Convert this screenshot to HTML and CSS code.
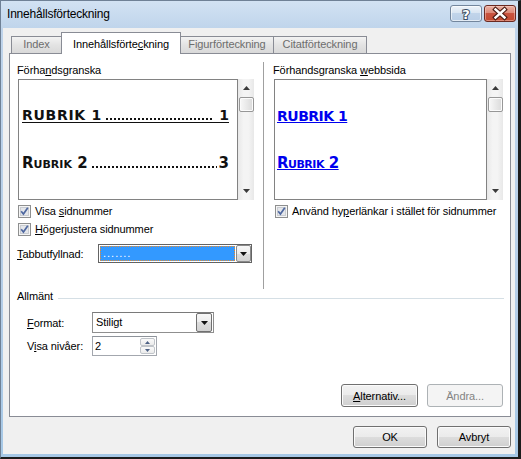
FILE: index.html
```html
<!DOCTYPE html>
<html lang="sv">
<head>
<meta charset="utf-8">
<title>Innehållsförteckning</title>
<link rel="stylesheet" href="styles.css">
</head>
<body>
<div class="window">
  <div class="titlebar">
    <span class="title">Innehållsförteckning</span>
    <div class="tb-buttons">
      <div class="tb-btn help">
        <svg width="30" height="15" viewBox="0 0 30 15"><text x="15" y="12.5" text-anchor="middle" class="qmark">?</text></svg>
      </div>
      <div class="tb-btn close">
        <svg width="30" height="15" viewBox="0 0 30 15">
          <path d="M10.5 3.5 L19.5 11.5 M19.5 3.5 L10.5 11.5" stroke="#4b1a12" stroke-width="4.6" stroke-linecap="square" fill="none"/>
          <path d="M10.5 3.5 L19.5 11.5 M19.5 3.5 L10.5 11.5" stroke="#ffffff" stroke-width="2.4" stroke-linecap="square" fill="none"/>
        </svg>
      </div>
    </div>
  </div>
  <div class="client">
    <div class="tabs">
      <div class="tab t-index">Index</div>
      <div class="tab active t-toc">Innehållsförte<u>c</u>kning</div>
      <div class="tab t-fig">Figurförteckning</div>
      <div class="tab t-cit">Citatförteckning</div>
    </div>
    <div class="panel">
      <div class="cols">
        <div class="col col-left">
          <div class="label">Förha<u>n</u>dsgranska</div>
          <div class="preview-row">
            <div class="preview preview-print">
              <div class="toc1"><span class="lbl">RUBRIK 1</span><span class="lead"></span><span class="pg">1</span></div>
              <div class="toc2"><span class="lbl">Rubrik 2</span><span class="lead"></span><span class="pg">3</span></div>
            </div>
            <div class="scrollbar">
              <svg class="arr" width="7" height="4" viewBox="0 0 7 4"><path d="M3.5 0 L7 4 L0 4 Z" fill="#3a3a3a"/></svg>
              <div class="thumb"></div>
              <div class="sb-fill"></div>
              <svg class="arr" width="7" height="4" viewBox="0 0 7 4"><path d="M0 0 L7 0 L3.5 4 Z" fill="#3a3a3a"/></svg>
            </div>
          </div>
          <div class="check-row first">
            <svg class="cb" width="13" height="13" viewBox="0 0 13 13"><rect x="0.5" y="0.5" width="12" height="12" fill="#f5f5f5" stroke="#8e8f8f"/><rect x="2.5" y="2.5" width="8" height="8" fill="#e4e6ea" stroke="#c9ccd1"/><path d="M3.2 6.3 L5.4 9 L9.8 2.8" fill="none" stroke="#4f68a0" stroke-width="1.7"/></svg>
            <span>Visa <u>s</u>idnummer</span>
          </div>
          <div class="check-row">
            <svg class="cb" width="13" height="13" viewBox="0 0 13 13"><rect x="0.5" y="0.5" width="12" height="12" fill="#f5f5f5" stroke="#8e8f8f"/><rect x="2.5" y="2.5" width="8" height="8" fill="#e4e6ea" stroke="#c9ccd1"/><path d="M3.2 6.3 L5.4 9 L9.8 2.8" fill="none" stroke="#4f68a0" stroke-width="1.7"/></svg>
            <span><u>H</u>ögerjustera sidnummer</span>
          </div>
          <div class="field-row tab-row">
            <span class="flabel"><u>T</u>abbutfyllnad:</span>
            <div class="combo combo-focus">
              <div class="combo-sel"><span class="sel-text">.......</span></div>
              <div class="combo-btn"><svg width="7" height="4" viewBox="0 0 7 4"><path d="M0 0 L7 0 L3.5 4 Z" fill="#111"/></svg></div>
            </div>
          </div>
        </div>
        <div class="divider"></div>
        <div class="col col-right">
          <div class="label">Förhandsgranska <u>w</u>ebbsida</div>
          <div class="preview-row">
            <div class="preview preview-web">
              <div class="web1">RUBRIK 1</div>
              <div class="web2">Rubrik 2</div>
            </div>
            <div class="scrollbar">
              <svg class="arr" width="7" height="4" viewBox="0 0 7 4"><path d="M3.5 0 L7 4 L0 4 Z" fill="#3a3a3a"/></svg>
              <div class="thumb"></div>
              <div class="sb-fill"></div>
              <svg class="arr" width="7" height="4" viewBox="0 0 7 4"><path d="M0 0 L7 0 L3.5 4 Z" fill="#3a3a3a"/></svg>
            </div>
          </div>
          <div class="check-row first right-check">
            <svg class="cb" width="13" height="13" viewBox="0 0 13 13"><rect x="0.5" y="0.5" width="12" height="12" fill="#f5f5f5" stroke="#8e8f8f"/><rect x="2.5" y="2.5" width="8" height="8" fill="#e4e6ea" stroke="#c9ccd1"/><path d="M3.2 6.3 L5.4 9 L9.8 2.8" fill="none" stroke="#4f68a0" stroke-width="1.7"/></svg>
            <span>Använd hy<u>p</u>erlänkar i stället för sidnummer</span>
          </div>
        </div>
      </div>
      <div class="group">
        <span class="group-title">Allmänt</span>
        <div class="group-line"></div>
      </div>
      <div class="form-row format-row">
        <span class="flabel2"><u>F</u>ormat:</span>
        <div class="combo combo-format">
          <div class="combo-val">Stiligt</div>
          <div class="combo-btn"><svg width="7" height="4" viewBox="0 0 7 4"><path d="M0 0 L7 0 L3.5 4 Z" fill="#111"/></svg></div>
        </div>
      </div>
      <div class="form-row level-row">
        <span class="flabel2">V<u>i</u>sa nivåer:</span>
        <div class="spinner">
          <div class="spin-val">2</div>
          <div class="spin-btns">
            <div class="spin-btn"><svg width="5" height="3" viewBox="0 0 5 3"><path d="M2.5 0 L5 3 L0 3 Z" fill="#4d6185"/></svg></div>
            <div class="spin-btn"><svg width="5" height="3" viewBox="0 0 5 3"><path d="M0 0 L5 0 L2.5 3 Z" fill="#4d6185"/></svg></div>
          </div>
        </div>
      </div>
      <div class="panel-buttons">
        <div class="btn btn-alt"><span><u>A</u>lternativ...</span></div>
        <div class="btn btn-disabled btn-change"><span>Ändra...</span></div>
      </div>
    </div>
    <div class="dialog-buttons">
      <div class="btn btn-ok">OK</div>
      <div class="btn btn-cancel">Avbryt</div>
    </div>
  </div>
</div>
</body>
</html>
```
FILE: styles.css
```css
html, body {
  margin: 0;
  padding: 0;
  background: #1c1c1c;
  width: 521px;
  height: 459px;
  overflow: hidden;
}

.window {
  box-sizing: border-box;
  width: 521px;
  height: 459px;
  border-left: 1px solid #6f8196;
  border-top: 1px solid #6f8196;
  border-right: 3px solid #1c1c1c;
  border-bottom: 2px solid #1c1c1c;
  background: linear-gradient(#d2e2f3 0px, #bfd4eb 28px, #b4cde7 300px, #a6c8e6 100%);
  padding: 0 3px 3px 2px;
  display: flex;
  flex-direction: column;
  font-family: "Liberation Sans", Arial, sans-serif;
  font-size: 11px;
  letter-spacing: -0.1px;
  color: #000;
}

/* ---------- title bar ---------- */
.titlebar {
  height: 27px;
  display: flex;
  align-items: flex-start;
  margin-right: -2px;
  flex: none;
}

.title {
  font-size: 12px;
  line-height: 14px;
  letter-spacing: -0.2px;
  padding: 6px 0 0 4px;
  color: #000;
}

.tb-buttons {
  margin-left: auto;
  display: flex;
  gap: 2px;
  padding: 4px 1px 0 0;
}

.tb-btn {
  box-sizing: border-box;
  width: 32px;
  height: 17px;
  border-radius: 3px;
  display: flex;
  align-items: center;
  justify-content: center;
}

.help {
  border: 1px solid #73869d;
  background: linear-gradient(#eef3f9 0%, #d9e5f2 45%, #c1d4ea 50%, #b9cee6 100%);
  box-shadow: inset 0 0 0 1px rgba(255,255,255,0.6);
}

.close {
  border: 1px solid #6b2a22;
  background: linear-gradient(#eab1a4 0%, #dc8a78 45%, #c8533f 50%, #c2492f 100%);
  box-shadow: inset 0 0 0 1px rgba(255,220,210,0.45);
}

.qmark {
  font-family: "DejaVu Sans", sans-serif;
  font-weight: bold;
  font-size: 13px;
  fill: #ffffff;
  stroke: #3d4d62;
  stroke-width: 2px;
  paint-order: stroke fill;
}

/* ---------- client ---------- */
.client {
  flex: 1;
  background: #f0f0f0;
  padding: 0 4px 0 6px;
  display: flex;
  flex-direction: column;
}

.tabs {
  display: flex;
  align-items: flex-end;
  height: 21px;
  margin-top: 4px;
  padding-left: 2px;
}

.tab {
  box-sizing: border-box;
  height: 17px;
  border: 1px solid #898c95;
  border-bottom: none;
  margin-right: -1px;
  line-height: 15px;
  padding-bottom: 1px;
  text-align: center;
  color: #6d6d6d;
  background: linear-gradient(#f3f3f3, #e3e3e3 50%, #d9d9d9);
}

.t-index { width: 51px; }
.t-toc { width: 120px; }
.t-fig { width: 94px; }
.t-cit { width: 94px; }

.tab.active {
  position: relative;
  z-index: 1;
  height: 22px;
  margin-bottom: -1px;
  padding-top: 4px;
  padding-bottom: 2px;
  background: #ffffff;
  color: #000;
}

.panel {
  box-sizing: border-box;
  width: 502px;
  height: 364px;
  border: 1px solid #898c95;
  background: #ffffff;
  padding: 9px 7px 0 7px;
  display: flex;
  flex-direction: column;
}

.cols {
  display: flex;
  height: 226px;
}

.col-left { width: 237px; }
.col-right { width: 230px; }

.divider {
  width: 1px;
  border-right: 1px solid #ffffff;
  background: #a0a0a0;
  height: 227px;
  margin: -1px 8px 0 9px;
}

.label {
  height: 15px;
  line-height: 15px;
  margin-bottom: 1px;
  white-space: nowrap;
}

.preview-row {
  display: flex;
  height: 121px;
  margin-left: 1px;
}

.preview {
  box-sizing: border-box;
  height: 121px;
  border: 1px solid #828282;
  background: #fff;
  font-family: "DejaVu Sans", sans-serif;
  font-weight: bold;
  letter-spacing: 0;
  overflow: hidden;
}

.preview-print {
  width: 220px;
  padding: 28px 8px 0 3px;
  color: #111;
}

.preview-web {
  width: 213px;
  padding: 28px 6px 0 2px;
  color: #0000ee;
}

.toc1, .toc2 {
  display: flex;
  white-space: nowrap;
}

.toc1 {
  font-size: 14px;
  line-height: 14px;
  height: 14px;
  border-bottom: 1px solid #111;
}

.toc1 .lbl {
  letter-spacing: 0.7px;
}

.toc1 .lead {
  margin: 0 5px 0 4px;
  background-position: 0 10px;
}

.toc2 {
  font-size: 15px;
  line-height: 18px;
  margin-top: 31px;
  font-variant: small-caps;
}

.toc2 .lead {
  margin: 0 2px 0 4px;
  background-position: 0 12px;
}

.lead {
  flex: 1;
  min-width: 0;
  background-image: linear-gradient(90deg, #111 2px, transparent 2px);
  background-size: 4px 2px;
  background-repeat: repeat-x;
}

.web1, .web2 {
  text-decoration: underline;
  text-decoration-thickness: 1.4px;
  white-space: nowrap;
  letter-spacing: -0.5px;
}

.web1 {
  font-size: 14px;
  line-height: 16px;
}

.web2 {
  font-size: 15px;
  line-height: 18px;
  margin-top: 30px;
  font-variant: small-caps;
}

.scrollbar {
  box-sizing: border-box;
  width: 16px;
  height: 121px;
  background: linear-gradient(90deg, #e8e8e8, #f4f4f4 35%, #f4f4f4 65%, #e8e8e8);
  display: flex;
  flex-direction: column;
  align-items: center;
  padding: 7px 0 7px;
}

.arr { flex: none; display: block; }

.thumb {
  box-sizing: border-box;
  width: 15px;
  height: 15px;
  margin-top: 7px;
  border: 1px solid #979797;
  border-radius: 2px;
  background: linear-gradient(90deg, #f8f8f8, #e9e9e9 50%, #dadada);
  box-shadow: inset 0 0 0 1px #fbfbfb;
}

.sb-fill { flex: 1; }

.check-row {
  display: flex;
  align-items: center;
  height: 13px;
  line-height: 13px;
  margin-top: 5px;
  margin-left: 1px;
  white-space: nowrap;
}

.right-check { margin-left: 2px; }

.cb {
  flex: none;
  display: block;
  margin-right: 4px;
}

.field-row {
  display: flex;
  align-items: center;
  margin-top: 8px;
  height: 19px;
}

.flabel {
  width: 81px;
  flex: none;
}

.combo {
  box-sizing: border-box;
  display: flex;
  background: #fff;
}

.combo-focus {
  width: 154px;
  height: 19px;
  border: 1px solid #646464;
  padding: 1px 0 1px 1px;
}

.combo-sel {
  flex: 1;
  box-sizing: border-box;
  background: #3399ff;
  border: 1px dotted #e88a2c;
  color: #fff;
  line-height: 13px;
  padding-left: 2px;
  margin-right: 1px;
}

.sel-text {
  letter-spacing: 1px;
}

.combo-btn {
  box-sizing: border-box;
  width: 15px;
  border: 1px solid #8a8a8a;
  border-radius: 2px;
  background: linear-gradient(#f7f7f7, #ececec 50%, #dddddd 50%, #d2d2d2);
  display: flex;
  align-items: center;
  justify-content: center;
  margin: -1px 0;
}

.combo-btn svg { display: block; }

/* ---------- general group ---------- */
.group {
  display: flex;
  height: 15px;
  line-height: 15px;
}

.group-line {
  flex: 1;
  height: 1px;
  background: #d5dfe5;
  margin: 9px -1px 0 5px;
}

.form-row {
  display: flex;
  align-items: center;
  padding-left: 10px;
}

.format-row {
  margin-top: 8px;
  height: 21px;
}

.level-row {
  margin-top: 3px;
  height: 20px;
}

.flabel2 {
  width: 65px;
  flex: none;
}

.combo-format {
  width: 122px;
  height: 21px;
  border: 1px solid #8f8f8f;
  border-top-color: #7a7a7a;
  padding: 1px 1px 1px 3px;
}

.combo-val {
  flex: 1;
  line-height: 17px;
}

.combo-format .combo-btn {
  width: 16px;
  border-color: #707070;
}

.spinner {
  box-sizing: border-box;
  width: 65px;
  height: 20px;
  border: 1px solid #a3a7ae;
  border-top-color: #8e939a;
  background: #fff;
  display: flex;
  padding: 0 1px 0 2px;
}

.spin-val {
  flex: 1;
  line-height: 18px;
}

.spin-btns {
  width: 15px;
  display: flex;
  flex-direction: column;
  padding: 1px 0;
  box-sizing: border-box;
}

.spin-btn {
  flex: 1;
  box-sizing: border-box;
  border: 1px solid #c0c4c9;
  border-radius: 2px;
  background: linear-gradient(#fafafa, #ebebeb);
  display: flex;
  align-items: center;
  justify-content: center;
}

.spin-btn svg { display: block; }

/* ---------- buttons ---------- */
.btn {
  box-sizing: border-box;
  border: 1px solid #707070;
  border-radius: 3px;
  background: linear-gradient(#f2f2f2 0%, #ebebeb 50%, #dddddd 50%, #cfcfcf 100%);
  box-shadow: inset 0 0 0 1px #fbfbfb;
  display: flex;
  align-items: center;
  justify-content: center;
  color: #000;
  white-space: nowrap;
}

.btn-disabled {
  border-color: #adb2b5;
  background: #f4f4f4;
  box-shadow: none;
  color: #838383;
}

.panel-buttons {
  display: flex;
  justify-content: flex-end;
  gap: 9px;
  margin-top: 28px;
}

.btn-alt { width: 77px; height: 23px; }
.btn-change { width: 76px; height: 23px; }

.dialog-buttons {
  display: flex;
  justify-content: flex-end;
  gap: 10px;
  margin-top: 9px;
}

.btn-ok, .btn-cancel {
  width: 74px;
  height: 22px;
}
```
